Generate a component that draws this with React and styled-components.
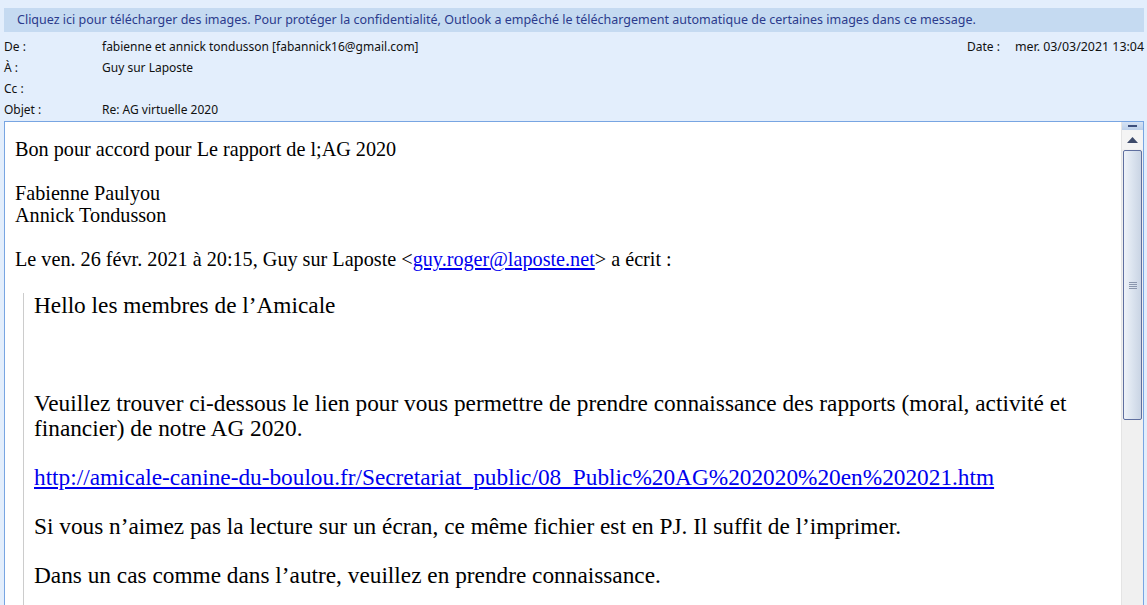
import React from 'react';
import styled, { createGlobalStyle } from 'styled-components';

const Global = createGlobalStyle`
  html, body { margin: 0; padding: 0; }
  body {
    background: #e3eefc;
    width: 1147px;
    height: 605px;
    overflow: hidden;
  }
`;

const Page = styled.div`
  display: flex;
  flex-direction: column;
  height: 605px;
  padding: 8px 3px 0 4px;
  box-sizing: border-box;
  font-family: "Noto Sans", "Open Sans", sans-serif;
  font-size: 12px;
  color: #111;
`;

const InfoBar = styled.div`
  background: #c5daf1;
  color: #2b3b8c;
  height: 24px;
  line-height: 24px;
  padding-left: 13px;
  white-space: nowrap;
  font-size: 12.5px;
`;

const Header = styled.div`
  display: flex;
  flex-direction: column;
  padding: 4px 0 1px;
`;

const Row = styled.div`
  display: flex;
  height: 21px;
  line-height: 21px;
  white-space: nowrap;
`;

const Label = styled.span`
  width: 98px;
  flex: none;
`;

const Value = styled.span`
  flex: 1;
`;

const DateLabel = styled.span`
  width: 48px;
`;

const DateValue = styled.span`
  font-size: 12.4px;
`;

const Body = styled.div`
  flex: 1;
  display: flex;
  background: #fff;
  border: 1px solid #78a5e2;
  border-bottom: none;
  min-height: 0;
`;

const Content = styled.div`
  flex: 1;
  padding: 16px 0 0 10px;
  font-family: "Liberation Serif", "Times New Roman", serif;
  font-size: 20.2px;
  line-height: 22px;
  color: #000;
  overflow: hidden;
`;

const Line = styled.div`
  min-height: 22px;
  white-space: nowrap;
`;

const Link = styled.a`
  color: #0000ee;
  text-decoration: underline;
`;

const Quote = styled.div`
  margin: 23px 0 0 8px;
  padding: 0 10px 40px;
  border-left: 1px solid #cccccc;
  font-size: 23.3px;
  line-height: 24.5px;
`;

const Para = styled.p`
  margin: 0 0 24.5px;
  min-height: 24.5px;
`;

const ScrollBar = styled.div`
  width: 21px;
  flex: none;
  display: flex;
  flex-direction: column;
  background: #f0f0f0;
  border-left: 1px solid #e4e4e4;
`;

const SplitBtn = styled.div`
  height: 8px;
  background: linear-gradient(#d6e3f4, #bcd0ea);
  display: flex;
  align-items: center;
  justify-content: center;
  &::after {
    content: '';
    width: 9px;
    height: 2px;
    background: #3d4f7c;
  }
`;

const ArrowBtn = styled.div`
  height: 19px;
  display: flex;
  align-items: center;
  justify-content: center;
  background: #f4f4f4;
`;

const Thumb = styled.div`
  margin: 1px 1px 0;
  height: 268px;
  border: 1px solid #5f6f9f;
  border-radius: 2px;
  background: linear-gradient(90deg, #eef2f8 0%, #dde5f0 45%, #c9d4e4 100%);
  display: flex;
  align-items: center;
  justify-content: center;
`;

const Grip = styled.div`
  width: 8px;
  height: 7px;
  background: repeating-linear-gradient(#8a96ad 0 1px, transparent 1px 2px);
`;

export default function App() {
  return (
    <>
      <Global />
      <Page>
        <InfoBar>
          Cliquez ici pour télécharger des images. Pour protéger la confidentialité, Outlook a empêché le téléchargement automatique de certaines images dans ce message.
        </InfoBar>
        <Header>
          <Row>
            <Label>De :</Label>
            <Value>fabienne et annick tondusson [fabannick16@gmail.com]</Value>
            <DateLabel>Date :</DateLabel>
            <DateValue>mer. 03/03/2021 13:04</DateValue>
          </Row>
          <Row>
            <Label>À :</Label>
            <Value>Guy sur Laposte</Value>
          </Row>
          <Row>
            <Label>Cc :</Label>
            <Value></Value>
          </Row>
          <Row>
            <Label>Objet :</Label>
            <Value>Re: AG virtuelle 2020</Value>
          </Row>
        </Header>
        <Body>
          <Content>
            <Line>Bon pour accord pour Le rapport de l;AG 2020</Line>
            <Line />
            <Line>Fabienne Paulyou</Line>
            <Line>Annick Tondusson</Line>
            <Line />
            <Line>
              Le ven. 26 févr. 2021 à 20:15, Guy sur Laposte &lt;<Link href="#">guy.roger@laposte.net</Link>&gt; a écrit :
            </Line>
            <Quote>
              <Para>Hello les membres de l’Amicale</Para>
              <Para>&nbsp;</Para>
              <Para>
                Veuillez trouver ci-dessous le lien pour vous permettre de prendre connaissance des rapports (moral, activité et financier) de notre AG 2020.
              </Para>
              <Para>
                <Link href="#">http://amicale-canine-du-boulou.fr/Secretariat_public/08_Public%20AG%202020%20en%202021.htm</Link>
              </Para>
              <Para>Si vous n’aimez pas la lecture sur un écran, ce même fichier est en PJ. Il suffit de l’imprimer.</Para>
              <Para>Dans un cas comme dans l’autre, veuillez en prendre connaissance.</Para>
            </Quote>
          </Content>
          <ScrollBar>
            <SplitBtn />
            <ArrowBtn>
              <svg width="11" height="6" viewBox="0 0 11 6">
                <path d="M0 6 L5.5 0 L11 6 Z" fill="#3d4a6a" />
              </svg>
            </ArrowBtn>
            <Thumb>
              <Grip />
            </Thumb>
          </ScrollBar>
        </Body>
      </Page>
    </>
  );
}
